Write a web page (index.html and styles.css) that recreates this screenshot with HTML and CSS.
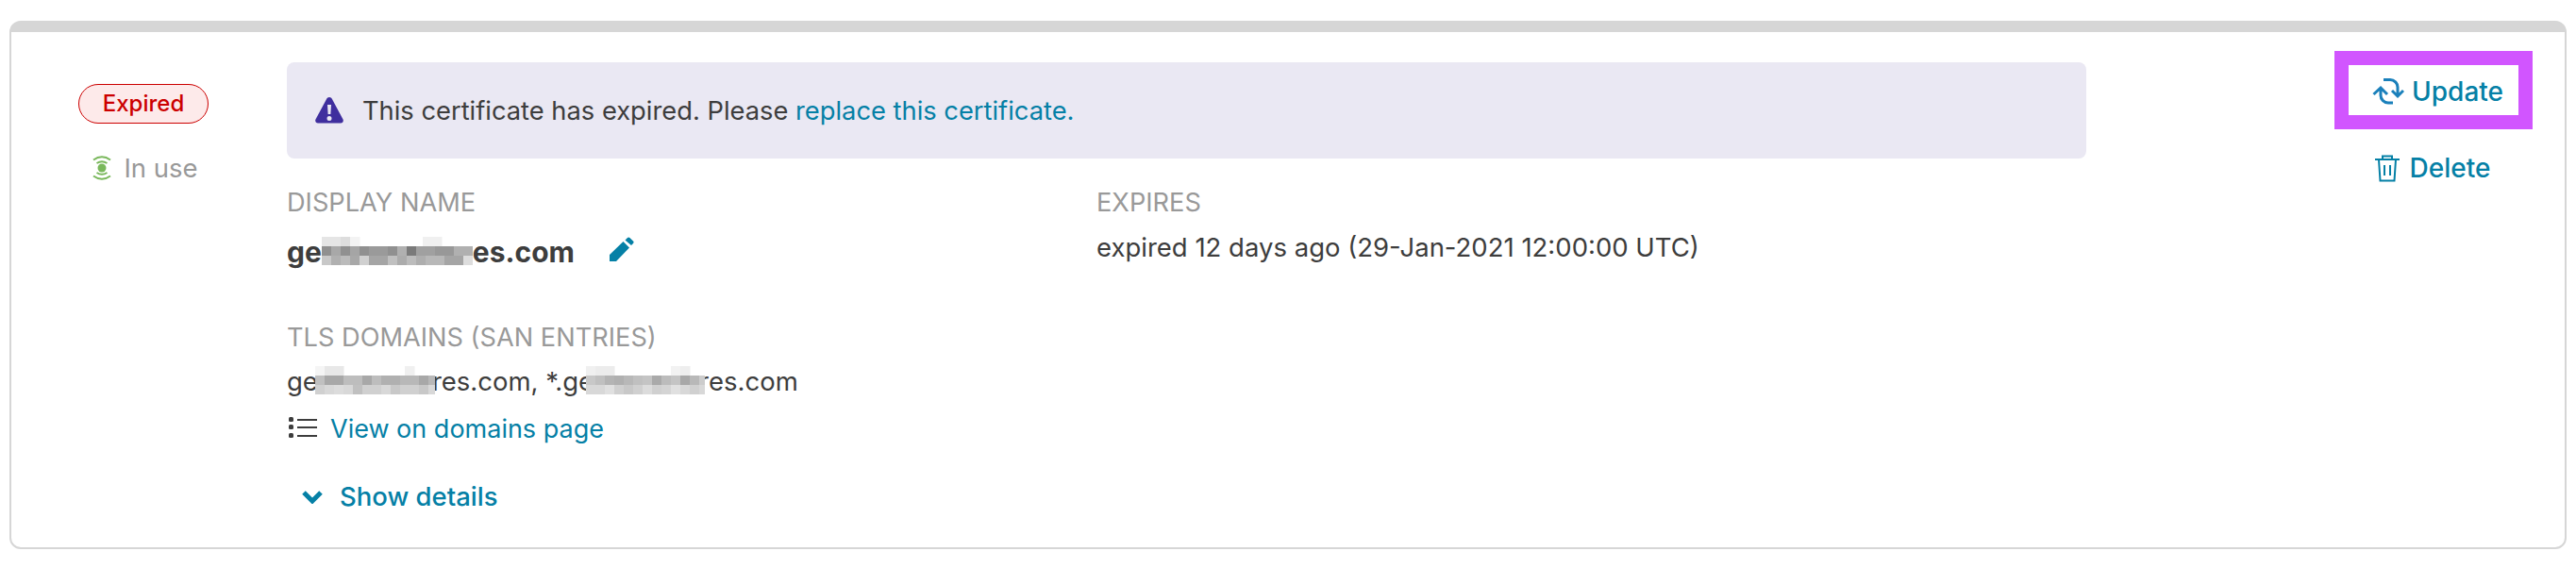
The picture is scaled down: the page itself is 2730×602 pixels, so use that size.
FILE: index.html
```html
<!doctype html>
<html>

<head>
    <title>TLS certificates</title>
    <link rel="stylesheet" href="styles.css">
</head>
<body>
<div class="card">
    <div class="status">
        <span class="badge">Expired</span>
        <div class="in-use">
            <svg class="signal" viewBox="0 0 20 28" width="20" height="28">
                <circle cx="10" cy="14" r="4.500" fill="#7ab85c"/>
                <path d="M1 5.500Q10-1 19 5.500M4.500 9Q10 5.500 15.500 9M4.500 19Q10 22.500 15.500 19M1 22.500Q10 29 19 22.500" fill="none" stroke="#7ab85c" stroke-width="2"/>
            </svg>
            In use
        </div>
    </div>

    <div class="main">
        <div class="alert">
            <svg class="warn" viewBox="0 0 30 28" width="30" height="28">
                <path d="M15 0c1.300 0 2.200.7 2.800 1.800l11.700 21.600c.9 2-.2 4.100-2.500 4.100H3c-2.300 0-3.400-2.100-2.500-4.100L12.200 1.800C12.800.7 13.700 0 15 0z" fill="#3f2e9e"/>
                <path d="M13 8h4l-.6 10h-2.800zM15 20a2.500 2.500 0 1 1 0 5 2.500 2.500 0 0 1 0-5z" fill="#eae8f3"/>
            </svg>
            <span>This certificate has expired. Please <a href="#">replace this certificate.</a></span>
        </div>

        <div class="fields">
            <div class="col-name">
                <div class="label">DISPLAY NAME</div>
                <div class="name">
                    ge
                    <svg class="pixels" width="160" height="30">
                        <rect x="0" y="0" fill="#e5e5e5"/><rect x="10" y="0" fill="#e5e5e5"/><rect x="20" y="0" fill="#dddddd"/><rect x="30" y="0" fill="#f3f3f3"/><rect x="107" y="0" fill="#f0f0f0"/><rect x="117" y="0" fill="#f0f0f0"/>
                        <rect x="0" y="10" fill="#909090"/><rect x="10" y="10" fill="#a8a8a8"/><rect x="20" y="10" fill="#909090"/><rect x="30" y="10" fill="#a5a5a5"/><rect x="40" y="10" fill="#909090"/><rect x="50" y="10" fill="#9a9a9a"/><rect x="60" y="10" fill="#9a9a9a"/><rect x="70" y="10" fill="#909090"/><rect x="80" y="10" fill="#b0b0b0"/><rect x="90" y="10" fill="#7a7a7a"/><rect x="100" y="10" fill="#a0a0a0"/><rect x="110" y="10" fill="#a0a0a0"/><rect x="120" y="10" fill="#989898"/><rect x="130" y="10" fill="#989898"/><rect x="140" y="10" fill="#b0b0b0"/><rect x="150" y="10" fill="#b0b0b0"/>
                        <rect x="0" y="20" fill="#c8c8c8"/><rect x="10" y="20" fill="#b0b0b0"/><rect x="20" y="20" fill="#bbbbbb"/><rect x="30" y="20" fill="#a8a8a8"/><rect x="40" y="20" fill="#d0d0d0"/><rect x="50" y="20" fill="#a5a5a5"/><rect x="60" y="20" fill="#a5a5a5"/><rect x="70" y="20" fill="#c0c0c0"/><rect x="80" y="20" fill="#acacac"/><rect x="90" y="20" fill="#bcbcbc"/><rect x="100" y="20" fill="#aeaeae"/><rect x="110" y="20" fill="#b8b8b8"/><rect x="120" y="20" fill="#b8b8b8"/><rect x="130" y="20" fill="#a5a5a5"/><rect x="140" y="20" fill="#a5a5a5"/><rect x="150" y="20" fill="#dddddd"/>
                    </svg>
                    es.com
                    <svg class="pencil" viewBox="0 0 26 26" width="26" height="26">
                        <path d="M0 26v-7L14.500 5 21 11.500 7 26zM16.500 3.500 19 1a1.700 1.700 0 0 1 2.400 0l3.600 3.600a1.700 1.700 0 0 1 0 2.400L23 9z" fill="#0580a6"/>
                    </svg>
                </div>
            </div>
            <div class="col-expires">
                <div class="label">EXPIRES</div>
                <div class="value">expired 12 days ago (29-Jan-2021 12:00:00 UTC)</div>
            </div>
        </div>

        <div class="label tls-label">TLS DOMAINS (SAN ENTRIES)</div>
        <div class="domains">
            ge
            <svg class="pixels first" width="127" height="30">
                <rect x="0" y="0" fill="#f5f5f5"/><rect x="10" y="0" fill="#e8e8e8"/><rect x="20" y="0" fill="#e8e8e8"/><rect x="95" y="0" fill="#f0f0f0"/>
                <rect x="0" y="10" fill="#c0c0c0"/><rect x="10" y="10" fill="#a8a8a8"/><rect x="20" y="10" fill="#a8a8a8"/><rect x="30" y="10" fill="#bdbdbd"/><rect x="40" y="10" fill="#bdbdbd"/><rect x="50" y="10" fill="#a8a8a8"/><rect x="60" y="10" fill="#bdbdbd"/><rect x="70" y="10" fill="#b0b0b0"/><rect x="80" y="10" fill="#b0b0b0"/><rect x="90" y="10" fill="#b8b8b8"/><rect x="100" y="10" fill="#b8b8b8"/><rect x="110" y="10" fill="#a8a8a8"/><rect x="120" y="10" fill="#b8b8b8"/>
                <rect x="0" y="20" fill="#d0d0d0"/><rect x="10" y="20" fill="#d8d8d8"/><rect x="20" y="20" fill="#dcdcdc"/><rect x="30" y="20" fill="#d8d8d8"/><rect x="40" y="20" fill="#c0c0c0"/><rect x="50" y="20" fill="#d0d0d0"/><rect x="60" y="20" fill="#d0d0d0"/><rect x="70" y="20" fill="#d8d8d8"/><rect x="80" y="20" fill="#c8c8c8"/><rect x="90" y="20" fill="#d0d0d0"/><rect x="100" y="20" fill="#d0d0d0"/><rect x="110" y="20" fill="#c8c8c8"/><rect x="120" y="20" fill="#d8d8d8"/>
            </svg>
            <span>res.com, *.ge</span>
            <svg class="pixels second" width="126" height="30">
                <rect x="0" y="0" fill="#f0f0f0"/><rect x="10" y="0" fill="#ececec"/><rect x="20" y="0" fill="#ececec"/><rect x="90" y="0" fill="#f2f2f2"/><rect x="100" y="0" fill="#eeeeee"/>
                <rect x="0" y="10" fill="#c8c8c8"/><rect x="10" y="10" fill="#c0c0c0"/><rect x="20" y="10" fill="#b4b4b4"/><rect x="30" y="10" fill="#b0b0b0"/><rect x="40" y="10" fill="#b8b8b8"/><rect x="50" y="10" fill="#c0c0c0"/><rect x="60" y="10" fill="#c4c4c4"/><rect x="70" y="10" fill="#aaaaaa"/><rect x="80" y="10" fill="#bcbcbc"/><rect x="90" y="10" fill="#c4c4c4"/><rect x="100" y="10" fill="#a8a8a8"/><rect x="110" y="10" fill="#b8b8b8"/><rect x="120" y="10" fill="#cccccc"/>
                <rect x="0" y="20" fill="#d8d8d8"/><rect x="10" y="20" fill="#d8d8d8"/><rect x="20" y="20" fill="#e0e0e0"/><rect x="30" y="20" fill="#d0d0d0"/><rect x="40" y="20" fill="#c8c8c8"/><rect x="50" y="20" fill="#d0d0d0"/><rect x="60" y="20" fill="#dcdcdc"/><rect x="70" y="20" fill="#d0d0d0"/><rect x="80" y="20" fill="#d4d4d4"/><rect x="90" y="20" fill="#e0e0e0"/><rect x="100" y="20" fill="#d8d8d8"/><rect x="110" y="20" fill="#d0d0d0"/><rect x="120" y="20" fill="#d8d8d8"/>
            </svg>
            <span>res.com</span>
        </div>
        <div class="domains-link">
            <svg class="list-icon" viewBox="0 0 31 22" width="31" height="22">
                <path d="M10 3h21M10 11h21M10 20h21" stroke="#3d3d3d" stroke-width="2" fill="none"/>
                <rect x="1" y="0" width="5" height="5" rx="1.500" fill="#3d3d3d"/><rect x="1" y="8" width="5" height="5" rx="1.500" fill="#3d3d3d"/><rect x="1" y="17" width="5" height="5" rx="1.500" fill="#3d3d3d"/>
            </svg>
            <a href="#">View on domains page</a>
        </div>
        <a class="details" href="#">
            <svg class="chevron" viewBox="0 0 24 15" width="24" height="15">
                <path d="M3 3l9 9 9-9" fill="none" stroke="#0580a6" stroke-width="5"/>
            </svg>
            Show details
        </a>
    </div>

    <div class="actions">
        <a class="action update" href="#">
            <svg viewBox="0 0 34 31" width="34" height="31">
                <path d="M12 2.500h7a8 8 0 0 1 8 8V19M21 14l6 6 6-6M9 12v7a8 8 0 0 0 8 8h5M1.500 18l7.500-7 7 7" fill="none" stroke="#1a80bb" stroke-width="3"/>
            </svg>
            Update
        </a>
        <a class="action delete" href="#">
            <svg viewBox="0 0 28 29" width="28" height="29">
                <path d="M1 5h26M9 5V1.500h10V5M5 5l1.500 22.500h15L23 5M11 11v11M17 11v11" fill="none" stroke="#0580a6" stroke-width="2"/>
            </svg>
            Delete
        </a>
    </div>
</div>
</body>

</html>
```

FILE: styles.css
```css
body {
    margin: 0;
    padding: 22px 10px 0;
    background-color: white;
    font-family: Inter, "Liberation Sans", sans-serif;
    font-size: 27.500px;
    color: #3d3d3d;
}
a {
    color: #0580a6;
    text-decoration: none;
}
svg {
    flex: none;
}
.card {
    display: flex;
    box-sizing: border-box;
    height: 560px;
    border: 2px solid #d6d6d6;
    border-top: 12px solid #d6d6d6;
    border-radius: 12px;
}

/* left column */
.status {
    display: flex;
    flex-direction: column;
    align-items: center;
    width: 280px;
    margin-right: 12px;
    padding-top: 55px;
}
.badge {
    box-sizing: border-box;
    width: 138px;
    height: 42px;
    border: 1.500px solid #cc0000;
    border-radius: 21px;
    background-color: #fdeaea;
    color: #cc0000;
    font-size: 24px;
    font-weight: 500;
    line-height: 39px;
    text-align: center;
}
.in-use {
    display: flex;
    align-items: center;
    gap: 13px;
    margin-top: 31px;
    padding-left: 4px;
    color: #999999;
    line-height: 32px;
}

/* middle column */
.main {
    width: 1907px;
    padding-top: 32px;
}
.alert {
    display: flex;
    align-items: center;
    gap: 20px;
    height: 102px;
    padding-left: 30px;
    border-radius: 8px;
    background-color: #eae8f3;
    font-size: 27.300px;
}
.fields {
    display: flex;
    margin-top: 29px;
}
.col-name {
    width: 858px;
}
.label {
    color: #999999;
    font-size: 27.200px;
    line-height: 36px;
}
.name {
    display: flex;
    align-items: center;
    height: 42px;
    margin-top: 13px;
    font-size: 30px;
    font-weight: 700;
}
.pixels {
    position: relative;
    z-index: 1;
    margin-top: -3px;
}
.pixels rect {
    width: 10.500px;
    height: 10px;
}
.pixels.first {
    margin: -3px -3px 0 -3px;
}
.pixels.second {
    margin: -3px -6px 0 -8px;
}
.pencil {
    margin: -6px 0 0 37px;
}
.value {
    margin-top: 9px;
    line-height: 40px;
}
.tls-label {
    margin-top: 52px;
}
.domains {
    display: flex;
    align-items: center;
    height: 36px;
    margin-top: 10px;
}
.domains-link {
    display: flex;
    align-items: center;
    gap: 14px;
    height: 36px;
    margin-top: 14px;
    padding-left: 1px;
    font-size: 27px;
}
.list-icon {
    margin-top: -2px;
}
.details {
    display: flex;
    align-items: center;
    gap: 17px;
    height: 40px;
    margin-top: 34px;
    padding-left: 15px;
    font-weight: 500;
}

/* right column */
.actions {
    display: flex;
    flex-direction: column;
    align-items: center;
    width: 210px;
    margin: 20px 34px 0 auto;
}
.action {
    display: flex;
    align-items: center;
    font-weight: 500;
    font-size: 28px;
}
.update {
    box-sizing: border-box;
    justify-content: flex-end;
    gap: 8px;
    width: 210px;
    height: 83px;
    padding: 3px 16px 0 0;
    border: 15px solid #d155ff;
}
.delete {
    gap: 10px;
    margin: 24px 3px 0 0;
}
```
